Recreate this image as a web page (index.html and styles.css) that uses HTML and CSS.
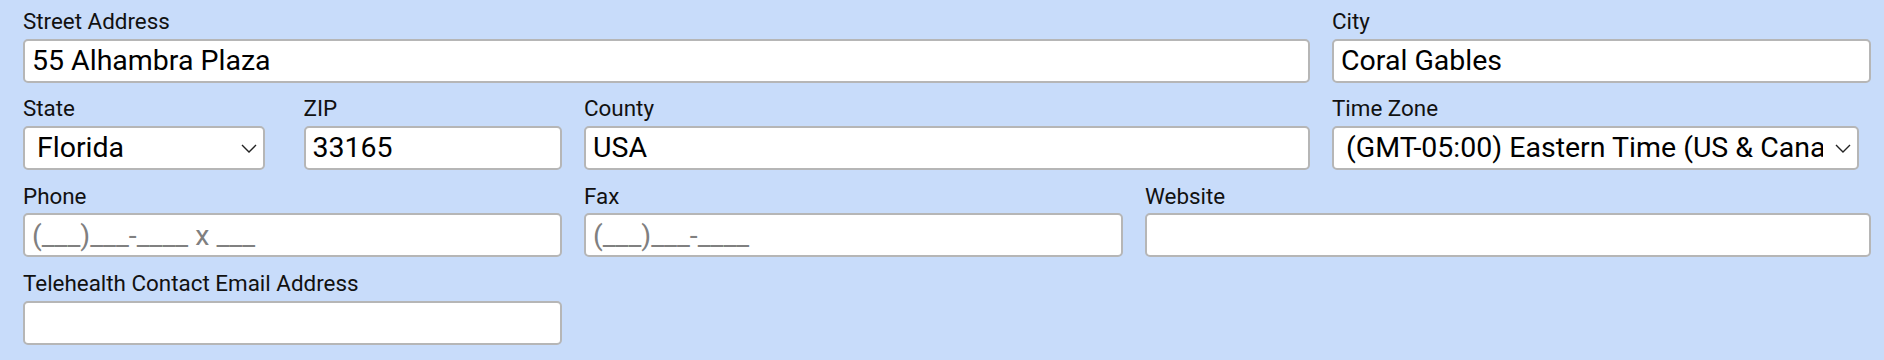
FILE: index.html
```html
<!DOCTYPE html>
<html lang="en">
<head>
<meta charset="utf-8">
<title>Address</title>
<link rel="stylesheet" href="styles.css">
</head>
<body>
<form class="form">
  <div class="row">
    <div class="col col-70">
      <label class="lbl">Street Address</label>
      <input class="field" type="text" value="55 Alhambra Plaza">
    </div>
    <div class="col col-30">
      <label class="lbl">City</label>
      <input class="field" type="text" value="Coral Gables">
    </div>
  </div>
  <div class="row">
    <div class="col col-30">
      <div class="row nested">
        <div class="col col-50">
          <label class="lbl">State</label>
          <div class="select-wrap state">
            <select class="field select"><option>Florida</option></select>
            <svg class="chev" width="16" height="9" viewBox="0 0 16 9"><path d="M1 1 L8 8 L15 1" fill="none" stroke="#222" stroke-width="1.4"/></svg>
          </div>
        </div>
        <div class="col col-50">
          <label class="lbl">ZIP</label>
          <input class="field" type="text" value="33165">
        </div>
      </div>
    </div>
    <div class="col col-40">
      <label class="lbl">County</label>
      <input class="field" type="text" value="USA">
    </div>
    <div class="col col-30">
      <label class="lbl">Time Zone</label>
      <div class="select-wrap tz">
        <select class="field select"><option>(GMT-05:00) Eastern Time (US &amp; Canada)</option></select>
        <svg class="chev" width="16" height="9" viewBox="0 0 16 9"><path d="M1 1 L8 8 L15 1" fill="none" stroke="#222" stroke-width="1.4"/></svg>
      </div>
    </div>
  </div>
  <div class="row">
    <div class="col col-30">
      <label class="lbl">Phone</label>
      <input class="field" type="text" placeholder="(___)___-____ x ___">
    </div>
    <div class="col col-30">
      <label class="lbl">Fax</label>
      <input class="field" type="text" placeholder="(___)___-____">
    </div>
    <div class="col col-40">
      <label class="lbl">Website</label>
      <input class="field" type="text">
    </div>
  </div>
  <div class="row">
    <div class="col col-30">
      <label class="lbl">Telehealth Contact Email Address</label>
      <input class="field" type="email">
    </div>
  </div>
</form>
</body>
</html>
```
FILE: styles.css
```css
html, body {
  margin: 0;
  padding: 0;
  background: #c8dcfa;
}
body {
  font-family: Roboto, "Liberation Sans", sans-serif;
  color: #111;
}
.form {
  padding-top: 9px;
}
.row {
  display: flex;
  margin: 0 2px 13.9px 12px;
}
.row.nested {
  margin: 0 -11px;
}
.col {
  box-sizing: border-box;
  padding: 0 11px;
}
.col-30 { flex: 0 0 30%; }
.col-40 { flex: 0 0 40%; }
.col-50 { flex: 0 0 50%; }
.col-70 { flex: 0 0 70%; }
.lbl {
  display: block;
  font-size: 22.4px;
  line-height: 24px;
  margin-bottom: 5.5px;
  color: #111;
}
.field {
  display: block;
  box-sizing: border-box;
  width: 100%;
  height: 44px;
  margin: 0;
  padding: 0 7px;
  border: 2px solid #b6b6b6;
  border-radius: 5px;
  background: #fff;
  font-family: Roboto, "Liberation Sans", sans-serif;
  font-size: 28.5px;
  color: #000;
  outline: none;
}
.field::placeholder {
  color: #808080;
}
.select-wrap {
  position: relative;
}
.select-wrap.state { width: 242px; }
.select-wrap.tz { width: 527px; }
.select {
  -webkit-appearance: none;
  appearance: none;
  padding: 0 34px 0 12px;
}
.chev {
  position: absolute;
  right: 8px;
  top: 18px;
  pointer-events: none;
}
```
